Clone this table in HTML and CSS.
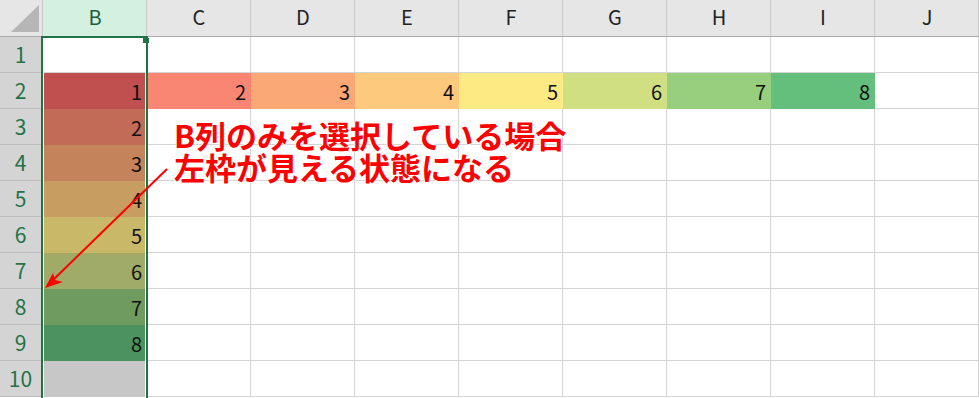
FILE: index.html
```html
<!DOCTYPE html>
<html lang="ja">
<head>
    <meta charset="UTF-8">
    <title>B列の選択</title>
    <link rel="stylesheet" href="styles.css">
</head>
<body>
    <div class="sheet">
        <!-- column headings -->
        <div class="corner"><span class="corner-tri"></span></div>
        <div class="ch sel">B</div>
        <div class="ch">C</div>
        <div class="ch">D</div>
        <div class="ch">E</div>
        <div class="ch">F</div>
        <div class="ch">G</div>
        <div class="ch">H</div>
        <div class="ch">I</div>
        <div class="ch">J</div>

        <div class="rh">1</div>
        <div class="cell b-active"></div>
        <div class="cell"></div><div class="cell"></div><div class="cell"></div><div class="cell"></div>
        <div class="cell"></div><div class="cell"></div><div class="cell"></div><div class="cell"></div>

        <div class="rh">2</div>
        <div class="cell fill s1">1</div>
        <div class="cell fill c2">2</div>
        <div class="cell fill c3">3</div>
        <div class="cell fill c4">4</div>
        <div class="cell fill c5">5</div>
        <div class="cell fill c6">6</div>
        <div class="cell fill c7">7</div>
        <div class="cell fill c8">8</div>
        <div class="cell"></div>

        <div class="rh">3</div>
        <div class="cell fill s2">2</div>
        <div class="cell"></div><div class="cell"></div><div class="cell"></div><div class="cell"></div>
        <div class="cell"></div><div class="cell"></div><div class="cell"></div><div class="cell"></div>

        <div class="rh">4</div>
        <div class="cell fill s3">3</div>
        <div class="cell"></div><div class="cell"></div><div class="cell"></div><div class="cell"></div>
        <div class="cell"></div><div class="cell"></div><div class="cell"></div><div class="cell"></div>

        <div class="rh">5</div>
        <div class="cell fill s4">4</div>
        <div class="cell"></div><div class="cell"></div><div class="cell"></div><div class="cell"></div>
        <div class="cell"></div><div class="cell"></div><div class="cell"></div><div class="cell"></div>

        <div class="rh">6</div>
        <div class="cell fill s5">5</div>
        <div class="cell"></div><div class="cell"></div><div class="cell"></div><div class="cell"></div>
        <div class="cell"></div><div class="cell"></div><div class="cell"></div><div class="cell"></div>

        <div class="rh">7</div>
        <div class="cell fill s6">6</div>
        <div class="cell"></div><div class="cell"></div><div class="cell"></div><div class="cell"></div>
        <div class="cell"></div><div class="cell"></div><div class="cell"></div><div class="cell"></div>

        <div class="rh">8</div>
        <div class="cell fill s7">7</div>
        <div class="cell"></div><div class="cell"></div><div class="cell"></div><div class="cell"></div>
        <div class="cell"></div><div class="cell"></div><div class="cell"></div><div class="cell"></div>

        <div class="rh">9</div>
        <div class="cell fill s8">8</div>
        <div class="cell"></div><div class="cell"></div><div class="cell"></div><div class="cell"></div>
        <div class="cell"></div><div class="cell"></div><div class="cell"></div><div class="cell"></div>

        <div class="rh">10</div>
        <div class="cell fill s-empty"></div>
        <div class="cell"></div><div class="cell"></div><div class="cell"></div><div class="cell"></div>
        <div class="cell"></div><div class="cell"></div><div class="cell"></div><div class="cell"></div>

        <!-- column B selection frame -->
        <div class="selection"><span class="handle"></span></div>

        <svg class="arrow" width="979" height="398" viewBox="0 0 979 398">
            <line x1="167" y1="169" x2="52" y2="281" stroke="#ff0000" stroke-width="2"/>
            <polygon points="45,288 53,273 55,280 63,282" fill="#ff0000"/>
        </svg>

        <p class="note">B列のみを選択している場合<br>左枠が見える状態になる</p>
    </div>
</body>
</html>
```

FILE: styles.css
```css
body {
    margin: 0;
    background-color: #fff;
    overflow: hidden;
    font-family: 'Noto Sans CJK JP', 'Noto Sans', sans-serif;
}
.sheet {
    position: relative;
    display: grid;
    grid-template-columns: 43px repeat(9, 104px);
    grid-template-rows: 37px repeat(10, 36px);
    width: 979px;
    height: 398px;
}

/* headings */
.corner {
    position: relative;
    background-color: #e6e6e6;
    border-bottom: 1px solid #ababab;
    box-shadow: inset -1px 0 0 #c6c6c6;
}
.corner-tri {
    position: absolute;
    right: 4px;
    bottom: 4px;
    width: 0;
    height: 0;
    border-left: 28px solid transparent;
    border-bottom: 27px solid #b6b6b6;
}
.ch {
    display: flex;
    align-items: center;
    justify-content: center;
    background-color: #e6e6e6;
    border-bottom: 1px solid #ababab;
    box-shadow: inset -1px 0 0 #c9c9c9;
    color: #222;
    font-size: 20px;
    line-height: 1;
    padding-bottom: 2px;
    box-sizing: border-box;
}
.ch.sel {
    background-color: #d3f0e0;
    color: #1d5d3f;
    border-bottom-color: #217346;
}
.rh {
    display: flex;
    align-items: center;
    justify-content: center;
    background-color: #d4d4d4;
    border-bottom: 1px solid #bcbcbc;
    color: #217346;
    font-size: 21px;
    line-height: 1;
    padding-right: 2px;
    box-sizing: border-box;
}

/* cells */
.cell {
    display: flex;
    align-items: center;
    justify-content: flex-end;
    border-right: 1px solid #d4d4d4;
    border-bottom: 1px solid #d4d4d4;
    padding: 2px 4px 0 0;
    box-sizing: border-box;
    color: #111;
    font-size: 20px;
    line-height: 1;
}
.cell.fill {
    border-color: transparent;
}
.b-active {
    border-right-color: transparent;
}

/* row 2 colour scale */
.c2 { background-color: #f98673; }
.c3 { background-color: #fba877; }
.c4 { background-color: #fdc97d; }
.c5 { background-color: #feea83; }
.c6 { background-color: #cfdf82; }
.c7 { background-color: #98cf7f; }
.c8 { background-color: #64bf7c; }

/* column B scale under the selection tint */
.s1 { background-color: #c0504f; }
.s2 { background-color: #c26b57; }
.s3 { background-color: #c5835b; }
.s4 { background-color: #c79d62; }
.s5 { background-color: #c9b868; }
.s6 { background-color: #9fab66; }
.s7 { background-color: #6f9b5f; }
.s8 { background-color: #4b925f; }
.s-empty { background-color: #c6c7c6; }

.selection {
    position: absolute;
    left: 41px;
    top: 36px;
    width: 107px;
    height: 380px;
    border: 2px solid #217346;
    box-sizing: border-box;
    box-shadow: inset 0 0 0 1px #fff;
}
.handle {
    position: absolute;
    right: -3px;
    top: 0;
    width: 6px;
    height: 5px;
    background-color: #217346;
}

.arrow {
    position: absolute;
    left: 0;
    top: 0;
}
.note {
    position: absolute;
    left: 174px;
    top: 119px;
    margin: 0;
    color: #ff0000;
    font-size: 31px;
    font-weight: bold;
    line-height: 32px;
    white-space: nowrap;
    text-shadow: 1px 0 0 #fff, -1px 0 0 #fff, 0 1px 0 #fff, 0 -1px 0 #fff;
}
```
